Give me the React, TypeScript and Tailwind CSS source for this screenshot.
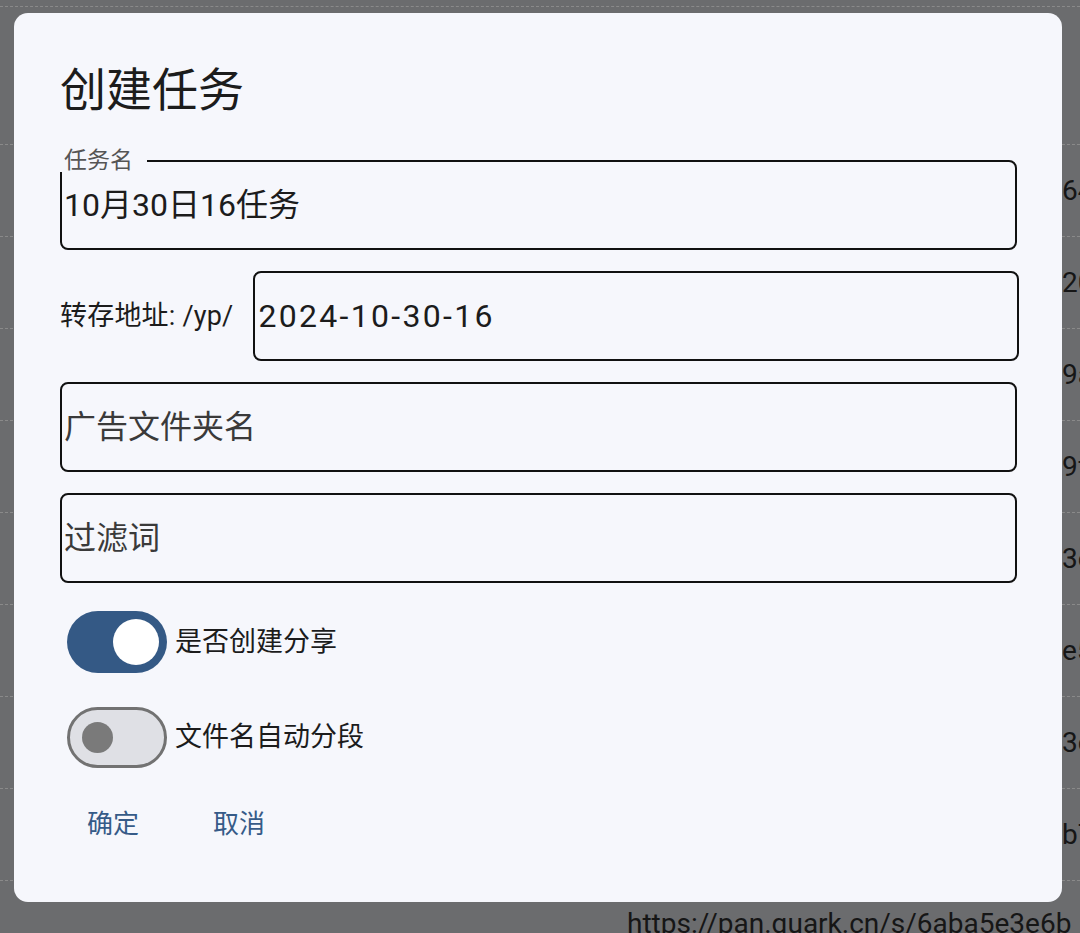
import React from "react";

const font = { fontFamily: 'Roboto, "Noto Sans CJK SC", sans-serif' };

const rows = ["64c1a9", "20d4e7", "9a7f3b", "9f2e61", "3e8b0c", "e51d47", "3c0a92", "b7f4d2"];

const Field = ({ value, placeholder, legend }: { value?: string; placeholder?: string; legend?: string }) => {
  return (
    <div className="relative flex h-[90px] items-center rounded-[8px] border-2 border-[#111] pl-[2px]">
      {legend && (
        <span className="absolute -left-[2px] -top-[12px] bg-[#f6f7fc] pl-[4px] pr-[14px] text-[23px] leading-[22px] text-[#555]">
          {legend}
        </span>
      )}
      {value ? (
        <span className="text-[32px] text-[#1c1c1c]">{value}</span>
      ) : (
        <span className="text-[32px] text-[#3a3a3a]">{placeholder}</span>
      )}
    </div>
  );
};

const Toggle = ({ on, label }: { on: boolean; label: string }) => {
  return (
    <div className="flex items-center gap-[8px] pl-[7px]">
      {on ? (
        <div className="flex h-[62px] w-[100px] items-center justify-end rounded-full bg-[#345985] pr-[8px]">
          <div className="h-[46px] w-[46px] rounded-full bg-white" />
        </div>
      ) : (
        <div className="flex h-[61px] w-[100px] items-center rounded-full border-[3px] border-[#727272] bg-[#dfe0e5] pl-[12px]">
          <div className="h-[31px] w-[31px] rounded-full bg-[#7a7a7a]" />
        </div>
      )}
      <span className="text-[27px] text-[#1c1c1c]">{label}</span>
    </div>
  );
};

export default function App() {
  return (
    <div className="relative h-[933px] w-full overflow-hidden bg-[#6b6c6e]" style={font}>
      {/* page behind the overlay */}
      <div className="flex flex-col">
        <div className="h-[7px] border-b border-dashed border-[#8a8a8a]" />
        <div className="h-[138px] border-b border-dashed border-[#8a8a8a]" />
        {rows.map((r) => (
          <div key={r} className="grid h-[92px] grid-cols-[1062px_1fr] items-center border-b border-dashed border-[#8a8a8a]">
            <div />
            <div className="whitespace-nowrap text-[28px] text-[#161616]">{r}</div>
          </div>
        ))}
        <div className="grid grid-cols-[627px_1fr] pt-[26px]">
          <div />
          <div className="whitespace-nowrap text-[28px] leading-[34px] text-[#161616]">https://pan.quark.cn/s/6aba5e3e6b</div>
        </div>
      </div>

      {/* dialog */}
      <div className="absolute left-[14px] top-[13px] h-[889px] w-[1048px] rounded-[14px] bg-[#f6f7fc] pl-[46px] pr-[45px] pt-[49px]">
        <h1 className="h-[56px] text-[46px] leading-[56px] text-[#1c1c1c]">创建任务</h1>

        <div className="mt-[42px] flex flex-col gap-[21px]">
          <Field legend="任务名" value="10月30日16任务" />
          <div className="-mr-[2px] flex items-center gap-[20px]">
            <span className="text-[27px] tracking-[0.2px] text-[#1c1c1c]">转存地址: /yp/</span>
            <div className="flex h-[90px] flex-1 items-center rounded-[8px] border-2 border-[#111] pl-[3px]">
              <span className="text-[32px] tracking-[2.3px] text-[#1c1c1c]">2024-10-30-16</span>
            </div>
          </div>
          <Field placeholder="广告文件夹名" />
          <Field placeholder="过滤词" />
        </div>

        <div className="mt-[28px] flex flex-col gap-[34px]">
          <Toggle on label="是否创建分享" />
          <Toggle on={false} label="文件名自动分段" />
        </div>

        <div className="mt-[38px] flex gap-[20px]">
          <button className="px-[27px] text-[26px] leading-[36px] text-[#365b88]">确定</button>
          <button className="px-[27px] text-[26px] leading-[36px] text-[#365b88]">取消</button>
        </div>
      </div>
    </div>
  );
}
